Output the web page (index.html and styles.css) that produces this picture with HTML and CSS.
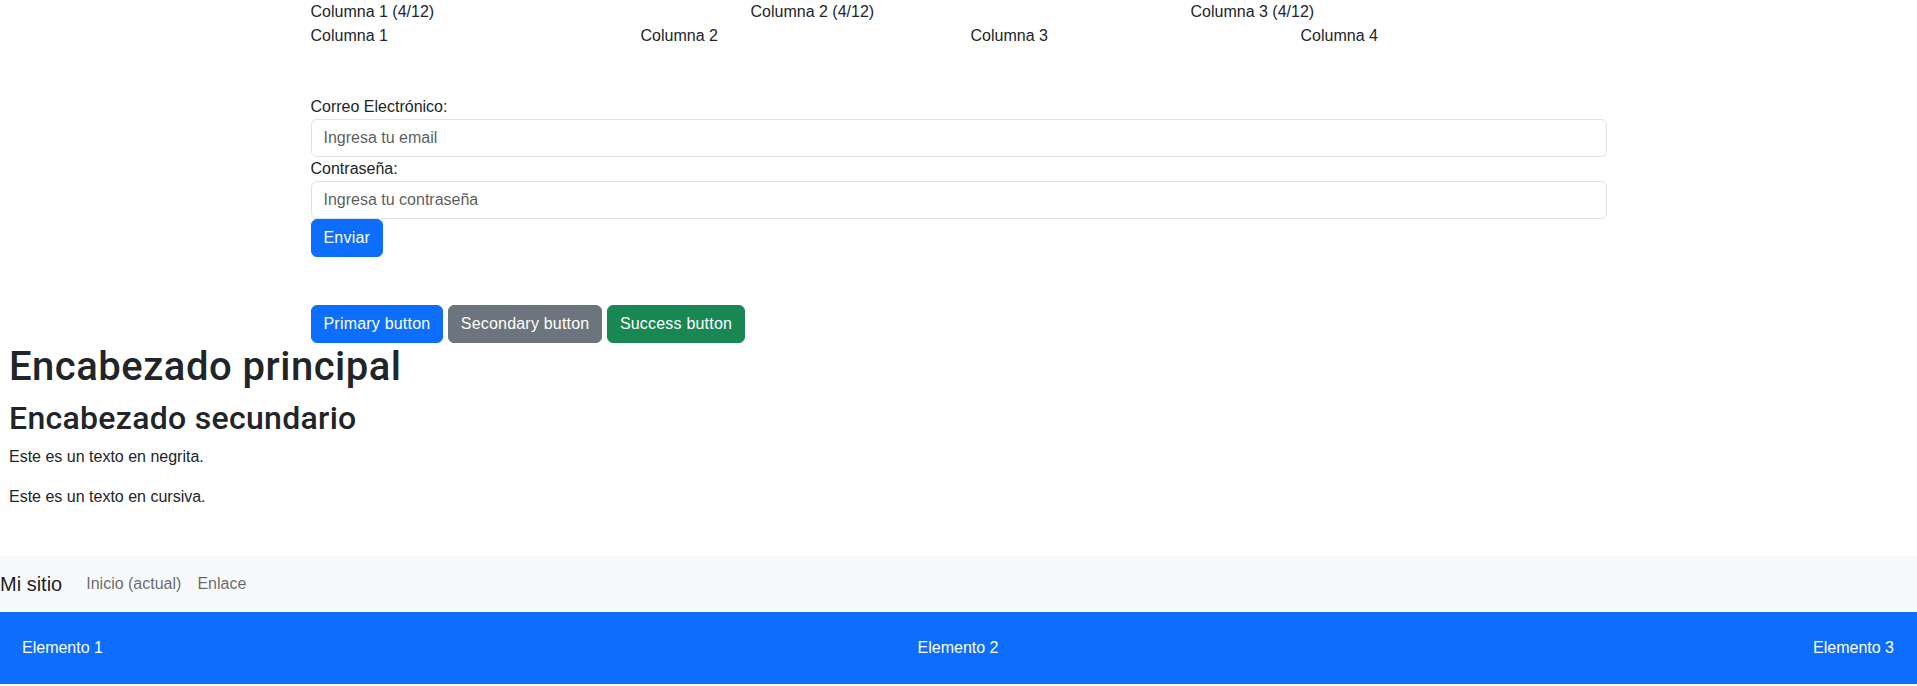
FILE: index.html
```html
<!DOCTYPE html>
<html lang="es">
<head>
<meta charset="utf-8">
<title>Demo</title>
<link rel="stylesheet" href="styles.css">
</head>
<body>
<div class="container">
  <div class="row row-3">
    <div class="col">Columna 1 (4/12)</div>
    <div class="col">Columna 2 (4/12)</div>
    <div class="col">Columna 3 (4/12)</div>
  </div>
  <div class="row row-4">
    <div class="col">Columna 1</div>
    <div class="col">Columna 2</div>
    <div class="col">Columna 3</div>
    <div class="col">Columna 4</div>
  </div>
</div>

<div class="container form-block">
  <form class="form">
    <label class="label" for="email">Correo Electrónico:</label>
    <input class="input" id="email" type="email" placeholder="Ingresa tu email">
    <label class="label" for="pass">Contraseña:</label>
    <input class="input" id="pass" type="password" placeholder="Ingresa tu contraseña">
    <div><button type="button" class="btn btn-primary">Enviar</button></div>
  </form>
</div>

<div class="container buttons-block">
  <button type="button" class="btn btn-primary">Primary button</button>
  <button type="button" class="btn btn-secondary">Secondary button</button>
  <button type="button" class="btn btn-success">Success button</button>
</div>

<div class="text-block">
  <h1 class="h1">Encabezado principal</h1>
  <h2 class="h2">Encabezado secundario</h2>
  <p class="para">Este es un texto en negrita.</p>
  <p class="para">Este es un texto en cursiva.</p>
</div>

<nav class="navbar">
  <a class="brand" href="#">Mi sitio</a>
  <a class="nav-link" href="#">Inicio (actual)</a>
  <a class="nav-link" href="#">Enlace</a>
</nav>

<div class="blue-bar">
  <div class="item">Elemento 1</div>
  <div class="item">Elemento 2</div>
  <div class="item">Elemento 3</div>
</div>
</body>
</html>
```

FILE: styles.css
```css
* {
  box-sizing: border-box;
}

html, body {
  margin: 0;
  padding: 0;
}

body {
  font-family: "Liberation Sans", Arial, sans-serif;
  font-size: 16px;
  line-height: 24px;
  color: #212529;
  background: #fff;
}

.container {
  width: 1320px;
  margin: 0 auto;
  padding: 0 12px;
}

.row {
  display: grid;
  margin: 0 -12px;
}

.col {
  padding: 0 12px;
}

.row-3 {
  grid-template-columns: repeat(3, 1fr);
}

.row-4 {
  grid-template-columns: repeat(4, 1fr);
}

.form-block {
  margin-top: 47px;
}

.form {
  display: flex;
  flex-direction: column;
}

.label {
  display: block;
  line-height: 24px;
}

.input {
  display: block;
  width: 100%;
  height: 38px;
  padding: 6px 12px;
  font-family: inherit;
  font-size: 16px;
  line-height: 24px;
  color: #212529;
  background: #fff;
  border: 1px solid #dee2e6;
  border-radius: 6px;
  outline: none;
}

.input::placeholder {
  color: rgba(33, 37, 41, 0.75);
}

.btn {
  display: inline-block;
  height: 38px;
  padding: 6px 12px;
  font-family: inherit;
  font-size: 16px;
  line-height: 24px;
  color: #fff;
  border: 1px solid transparent;
  border-radius: 6px;
  cursor: pointer;
  vertical-align: top;
  letter-spacing: 0.2px;
}

.btn-primary {
  background: #0d6efd;
  border-color: #0d6efd;
}

.btn-secondary {
  background: #6c757d;
  border-color: #6c757d;
}

.btn-success {
  background: #198754;
  border-color: #198754;
}

.buttons-block {
  margin-top: 48px;
  font-size: 16px;
  line-height: 38px;
  height: 38px;
}

.text-block {
  padding-left: 9px;
}

.h1 {
  margin: 0 0 8px;
  font-family: Roboto, "Liberation Sans", sans-serif;
  font-weight: 500;
  font-size: 40px;
  line-height: 48px;
  letter-spacing: 0.5px;
}

.h2 {
  margin: 0 0 8px;
  font-family: Roboto, "Liberation Sans", sans-serif;
  font-weight: 500;
  font-size: 32px;
  line-height: 38.4px;
  letter-spacing: 0.3px;
}

.para {
  margin: 0 0 16px;
  font-size: 16px;
  line-height: 24px;
}

.navbar {
  margin-top: 46.5px;
  display: flex;
  align-items: center;
  height: 56px;
  background: #f8f9fa;
  padding: 8px 0;
}

.brand {
  font-size: 20px;
  line-height: 30px;
  color: rgba(0, 0, 0, 0.9);
  text-decoration: none;
  margin-right: 16px;
}

.nav-link {
  padding: 8px;
  font-size: 16px;
  line-height: 24px;
  color: rgba(0, 0, 0, 0.6);
  text-decoration: none;
}

.blue-bar {
  display: flex;
  justify-content: space-between;
  background: #0d6efd;
  color: #fff;
  padding: 24px 23px 24px 22px;
}

.item {
  line-height: 24px;
  font-size: 16px;
}
```
